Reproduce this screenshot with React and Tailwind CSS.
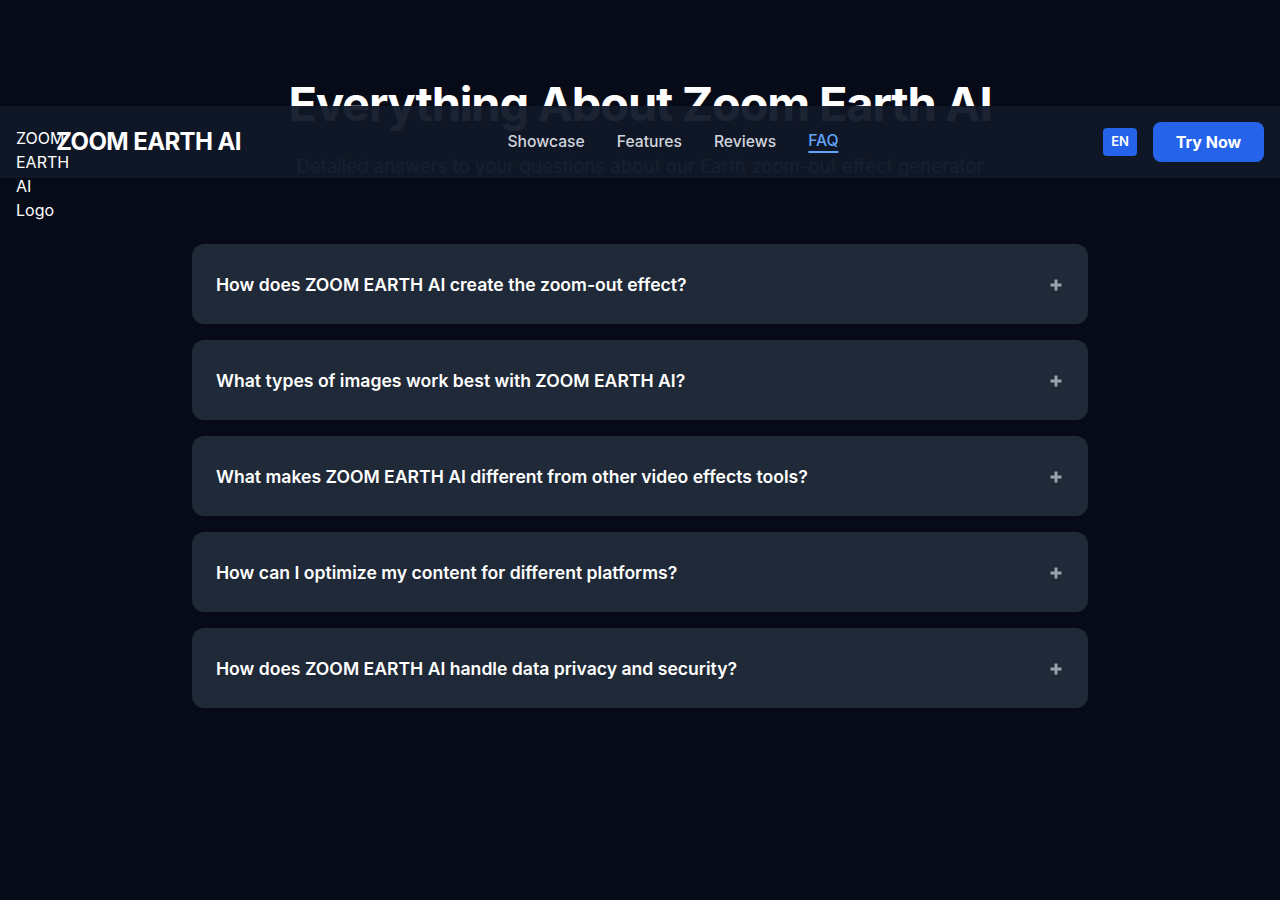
import React from 'react';

const faqs = [
  'How does ZOOM EARTH AI create the zoom-out effect?',
  'What types of images work best with ZOOM EARTH AI?',
  'What makes ZOOM EARTH AI different from other video effects tools?',
  'How can I optimize my content for different platforms?',
  'How does ZOOM EARTH AI handle data privacy and security?',
];

const PlusIcon = () => (
  <svg width="16" height="16" viewBox="0 0 16 16" className="text-gray-400 mt-0.5">
    <path d="M8 2.5v11M2.5 8h11" stroke="currentColor" strokeWidth="3" />
  </svg>
);

const Header = () => (
  <header className="absolute left-0 right-0 top-[106px] h-[72px] bg-gray-900/95 flex items-center justify-between px-4 z-10">
    <div className="flex items-center">
      {/* broken logo image, alt text spills over */}
      <div className="w-10 h-10 pt-1 text-base leading-6 text-white overflow-visible whitespace-normal">
        ZOOM EARTH AI Logo
      </div>
      <span className="text-2xl font-bold text-white tracking-tight">ZOOM EARTH AI</span>
    </div>
    <nav className="absolute left-1/2 -translate-x-1/2 flex items-center gap-8 text-[15.7px] font-medium ml-[33px]">
      <a className="text-gray-300">Showcase</a>
      <a className="text-gray-300">Features</a>
      <a className="text-gray-300">Reviews</a>
      <a className="text-[#60a5fa] border-b-2 border-[#60a5fa] leading-5">FAQ</a>
    </nav>
    <div className="flex items-center gap-4">
      <span className="bg-[#2563eb] text-white text-[13px] font-semibold rounded px-2 h-7 w-[34px] flex items-center justify-center">EN</span>
      <button className="bg-[#2563eb] text-white font-bold rounded-lg h-10 w-[111px]">Try Now</button>
    </div>
  </header>
);

export default function App() {
  return (
    <div className="relative min-h-[900px] bg-[#070b17] font-['Inter',sans-serif]">
      <Header />
      <section className="pt-20 pb-20">
        <h2 className="text-[47px] leading-[48px] font-bold text-white text-center tracking-tight">Everything About Zoom Earth AI</h2>
        <p className="mt-6 text-[18.6px] leading-7 text-gray-400 text-center">Detailed answers to your questions about our Earth zoom-out effect generator</p>
        <div className="max-w-4xl mx-auto mt-16 flex flex-col gap-4">
          {faqs.map((q) => (
            <div key={q} className="bg-[#1f2937] rounded-xl h-20 px-6 flex items-center justify-between">
              <span className="text-[17.6px] font-semibold text-white mt-0.5">{q}</span>
              <PlusIcon />
            </div>
          ))}
        </div>
      </section>
    </div>
  );
}
